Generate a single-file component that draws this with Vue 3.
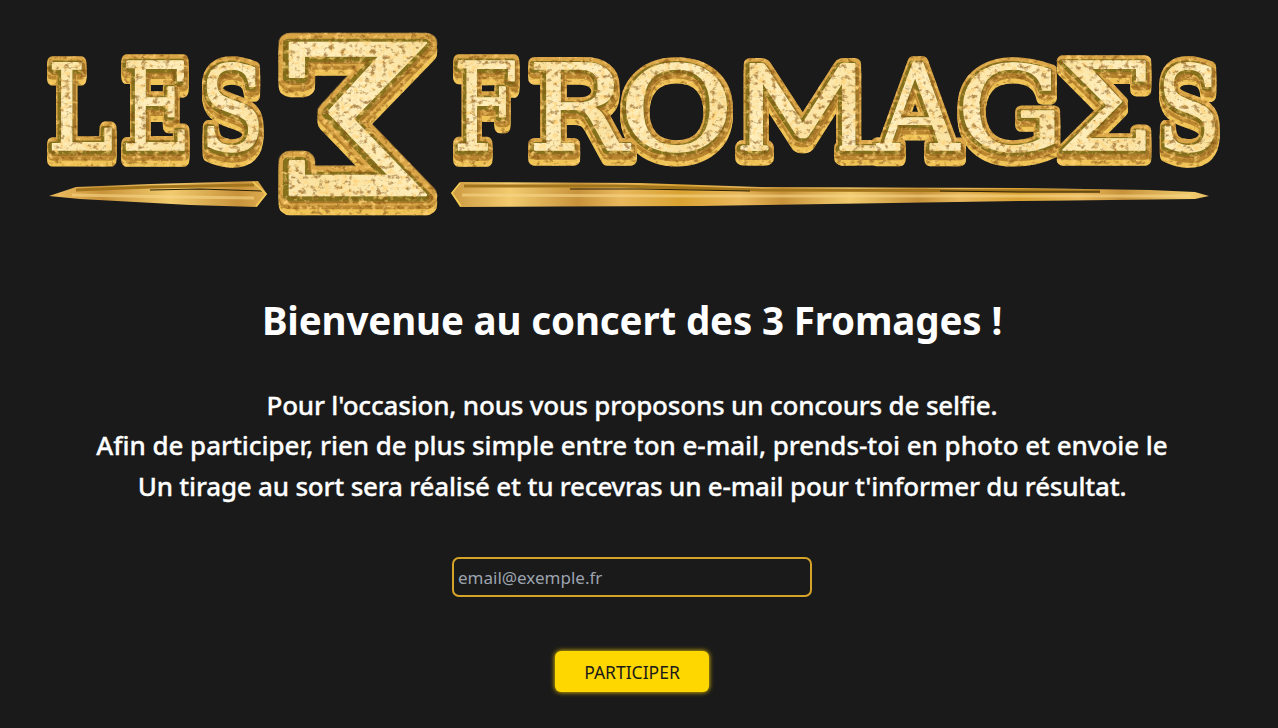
<script setup>
import { ref } from 'vue'

const email = ref('')
const SERIF = '"DejaVu Serif"'

// Each letter of the logo is fitted into its own box: left, top, right, bottom.
const letters = [
  { ch: 'L', box: [52, 62, 112, 150] },
  { ch: 'E', box: [126, 62, 184, 150] },
  { ch: 'S', box: [207, 61, 259, 151] },
  { ch: 'Σ', box: [290, 45, 426, 195], flip: true, grow: 1.8 },
  { ch: 'F', box: [458, 62, 515, 150] },
  { ch: 'R', box: [534, 62, 631, 150] },
  { ch: 'O', box: [626, 61, 727, 151] },
  { ch: 'M', box: [750, 62, 855, 150], family: 'Lato' },
  { ch: 'A', box: [876, 62, 961, 150] },
  { ch: 'G', box: [963, 61, 1055, 151] },
  { ch: 'Σ', box: [1063, 62, 1145, 150] },
  { ch: 'S', box: [1164, 61, 1215, 151] },
]

const ctx = document.createElement('canvas').getContext('2d')

function fit({ ch, box, flip, grow = 1, family = SERIF }) {
  ctx.font = `100px ${family}`
  const m = ctx.measureText(ch)
  const left = -m.actualBoundingBoxLeft
  const right = m.actualBoundingBoxRight
  const up = m.actualBoundingBoxAscent
  const down = m.actualBoundingBoxDescent
  const sx = (box[2] - box[0]) / (right - left)
  const sy = (box[3] - box[1]) / (up + down)
  const tx = flip ? box[2] + left * sx : box[0] - left * sx
  return {
    ch,
    family,
    transform: `translate(${tx} ${box[1] + up * sy}) scale(${flip ? -sx : sx} ${sy})`,
    k: grow / Math.sqrt(sx * sy),
  }
}

const glyphs = letters.map(fit)
</script>

<template>
  <main class="page">
    <svg class="logo" viewBox="0 0 1264 230" role="img" aria-label="Les 3 Fromages">
      <defs>
        <linearGradient id="face" x1="0" y1="0" x2="60" y2="44" gradientUnits="userSpaceOnUse" spreadMethod="reflect">
          <stop offset="0" stop-color="#ffefbe" />
          <stop offset=".5" stop-color="#fae2a0" />
          <stop offset="1" stop-color="#fff4d6" />
        </linearGradient>
        <linearGradient id="bar" x1="0" y1="0" x2="170" y2="0" gradientUnits="userSpaceOnUse" spreadMethod="reflect">
          <stop offset="0" stop-color="#d9a232" />
          <stop offset=".35" stop-color="#e9b85c" />
          <stop offset=".6" stop-color="#c8933a" />
          <stop offset="1" stop-color="#f2cb6e" />
        </linearGradient>
        <filter id="gold" x="0" y="0" width="1264" height="230" filterUnits="userSpaceOnUse" color-interpolation-filters="sRGB">
          <feTurbulence type="fractalNoise" baseFrequency=".17 .2" numOctaves="4" seed="11" result="grain" />
          <feColorMatrix in="grain" values="0 0 0 0 .5  0 0 0 0 .3  0 0 0 0 .05  4 0 0 0 -2.15" result="dark" />
          <feComposite in="dark" in2="SourceGraphic" operator="in" result="darkIn" />
          <feColorMatrix in="grain" values="0 0 0 0 1  0 0 0 0 .82  0 0 0 0 .46  0 2.6 0 0 -1.3" result="light" />
          <feComposite in="light" in2="SourceGraphic" operator="in" result="lightIn" />
          <feComponentTransfer in="darkIn" result="darkSoft">
            <feFuncA type="linear" slope=".6" />
          </feComponentTransfer>
          <feMerge>
            <feMergeNode in="SourceGraphic" />
            <feMergeNode in="lightIn" />
            <feMergeNode in="darkSoft" />
          </feMerge>
        </filter>
        <g id="word">
          <text
            v-for="(g, i) in glyphs"
            :key="i"
            class="glyph"
            :transform="g.transform"
            :style="{ '--k': g.k, fontFamily: g.family }"
          >{{ g.ch }}</text>
          <path class="foot" d="M743 148H766M842 148H878" />
        </g>
      </defs>

      <g filter="url(#gold)">
        <use href="#word" class="drop" y="9.5" />
        <use href="#word" class="drop" y="7" />
        <use href="#word" class="side" y="4" />
        <use href="#word" class="rim" />
        <use href="#word" class="bevel" x="1.5" y="3" />
        <use href="#word" class="shade" x="-1.5" y="1" />
        <use href="#word" class="front" />
      </g>

      <g class="bars">
        <path fill="url(#bar)" d="M49 196L76 187L150 184L258 181L267 194L257 207L190 205L80 199Z" />
        <path class="groove" d="M76 190L150 187L254 185" />
        <path class="seam" d="M150 190L200 189L262 191" />
        <path class="shine" d="M72 195L180 197L254 198" />
        <path class="edge" d="M253 182L266 194L256 206" />
        <path fill="url(#bar)" d="M451 193L460 182L640 183L760 187L1020 188L1150 190L1195 192L1209 196L1195 199L1020 201L700 206L460 207Z" />
        <path class="groove" d="M464 186H620L760 190L1100 191" />
        <path class="seam" d="M570 189L640 189L750 191M940 191L1020 192L1100 192" />
        <path class="shine" d="M462 195L700 196L1000 196L1190 196" />
        <path class="edge" d="M460 183L452 193L461 206" />
      </g>
    </svg>

    <h1>Bienvenue au concert des 3 Fromages !</h1>

    <div class="intro">
      <p class="l1">Pour l'occasion, nous vous proposons un concours de selfie.</p>
      <p class="l2">Afin de participer, rien de plus simple entre ton e-mail, prends-toi en photo et envoie le</p>
      <p class="l3">Un tirage au sort sera réalisé et tu recevras un e-mail pour t'informer du résultat.</p>
    </div>

    <form class="form" @submit.prevent>
      <input v-model="email" type="email" placeholder="email@exemple.fr" />
      <button type="submit">PARTICIPER</button>
    </form>
  </main>
</template>

<style>
body {
  background: #1a1a1a;
  overflow: hidden;
}
</style>

<style scoped>
.page {
  width: 1264px;
  height: 728px;
  display: flex;
  flex-direction: column;
  align-items: center;
  color: #fff;
  font-family: 'Noto Sans', 'Open Sans', sans-serif;
}
.logo {
  width: 1264px;
  height: 230px;
  flex: none;
}
.glyph {
  font-size: 100px;
  stroke-width: calc(var(--r) * var(--k));
  stroke-linejoin: round;
}
.foot {
  fill: none;
  stroke-width: calc(var(--r) + 4px);
  stroke-linecap: round;
}
.drop {
  --r: 12px;
  fill: #efc356;
  stroke: #efc356;
}
.side {
  --r: 12px;
  fill: #b9862f;
  stroke: #b9862f;
}
.rim {
  --r: 12px;
  fill: #d9a546;
  stroke: #d9a546;
}
.bevel {
  --r: 6px;
  fill: #a8782a;
  stroke: #a8782a;
}
.shade {
  --r: 6px;
  fill: #85701c;
  stroke: #85701c;
}
.front {
  --r: 1.4px;
  fill: url(#face);
  stroke: url(#face);
}
.bars path {
  stroke-linejoin: round;
}
.groove {
  fill: none;
  stroke: #a3751c;
  stroke-width: 3;
}
.seam {
  fill: none;
  stroke: #2c2108;
  stroke-width: 1.2;
}
.shine {
  fill: none;
  stroke: #f6d588;
  stroke-width: 3;
  opacity: 0.6;
}
.edge {
  fill: none;
  stroke: #f3cc55;
  stroke-width: 1.5;
}
h1 {
  margin: 60px 0 0;
  font-size: 38.5px;
  line-height: 60px;
  font-weight: 700;
  letter-spacing: -0.14px;
  white-space: nowrap;
}
.intro {
  margin-top: 34.5px;
  font-size: 26px;
  line-height: 40.5px;
  font-weight: 500;
  text-align: center;
  white-space: nowrap;
  -webkit-text-stroke: 0.3px #fff;
}
.intro p {
  margin: 0;
}
.l1 {
  letter-spacing: -0.18px;
}
.l2 {
  letter-spacing: -0.05px;
}
.l3 {
  letter-spacing: -0.2px;
}
.form {
  margin-top: 50.5px;
  display: flex;
  flex-direction: column;
  align-items: center;
  gap: 54px;
}
input {
  box-sizing: border-box;
  width: 360px;
  height: 40px;
  padding: 1px 5px 0 4px;
  border: 2px solid #d6a329;
  border-radius: 7px;
  background: transparent;
  color: #fff;
  font: 400 17px 'Noto Sans', sans-serif;
  outline: none;
}
input::placeholder {
  color: #9ca3af;
  opacity: 1;
}
button {
  width: 154px;
  height: 41px;
  padding: 1px 0 0;
  border: 0;
  border-radius: 6px;
  background: #ffd700;
  box-shadow: 0 0 5px #ffd700;
  color: #1a1a1a;
  font: 400 17.5px 'Noto Sans', sans-serif;
}
</style>
